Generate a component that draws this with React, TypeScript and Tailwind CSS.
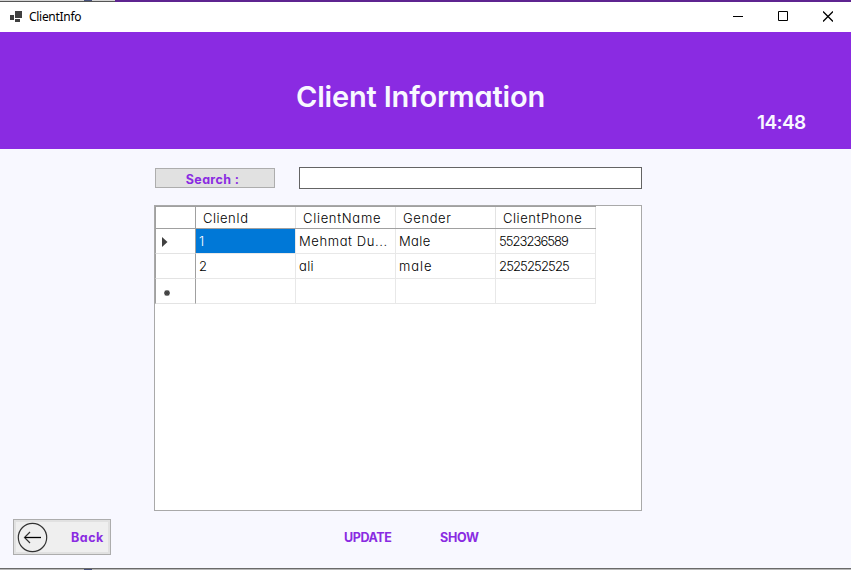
import React from "react";

type Cell = { text: string; cls: string };

const columns: Cell[] = [
  { text: "ClienId", cls: "tracking-[0.5px]" },
  { text: "ClientName", cls: "tracking-[0.7px]" },
  { text: "Gender", cls: "tracking-[0.6px]" },
  { text: "ClientPhone", cls: "tracking-[0.55px]" },
];

const rows: Cell[][] = [
  [
    { text: "1", cls: "" },
    { text: "Mehmat Du...", cls: "tracking-[0.6px]" },
    { text: "Male", cls: "tracking-[0.4px]" },
    { text: "5523236589", cls: "tracking-[-0.95px]" },
  ],
  [
    { text: "2", cls: "" },
    { text: "ali", cls: "tracking-[0.3px]" },
    { text: "male", cls: "tracking-[0.9px]" },
    { text: "2525252525", cls: "tracking-[-0.85px]" },
  ],
  [
    { text: "", cls: "" },
    { text: "", cls: "" },
    { text: "", cls: "" },
    { text: "", cls: "" },
  ],
];

function TitleBar() {
  return (
    <div className="flex h-[30px] shrink-0 items-center bg-white">
      <svg className="ml-[10px] mt-[-2px]" width="12" height="11" viewBox="0 0 12 11" fill="#404040" shapeRendering="crispEdges">
        <path d="M5 0h7v7H5zM0 4h4v5H0zM5 8h5v3H5z" />
      </svg>
      <span className="ml-[7px] mt-[-1px] font-['Noto_Sans','Open_Sans',sans-serif] text-[12px] tracking-[-0.3px] text-black">ClientInfo</span>
      <div className="mb-[2px] ml-auto mr-[18px] flex items-center gap-[35px]">
        <svg width="11" height="11" viewBox="0 0 11 11" stroke="#000" fill="none" className="ml-[-1px]">
          <path d="M0 5.5h10" />
        </svg>
        <svg width="11" height="11" viewBox="0 0 11 11" stroke="#000" fill="none" className="ml-[-1px]">
          <path d="M.5.5h9v9h-9z" />
        </svg>
        <svg width="10" height="11" viewBox="0 0 10 11" stroke="#000" strokeWidth="1.25" fill="none" className="ml-[-1px]">
          <path d="M0 .5l10 10M10 .5l-10 10" />
        </svg>
      </div>
    </div>
  );
}

function DataGrid() {
  return (
    <div className="ml-[154px] mt-4 h-[306px] w-[488px] shrink-0 border border-[#a9a9a9] bg-white text-[13px] font-light text-black">
      <div className="flex h-[23px] w-[441px] border-b border-t border-[#a0a0a0]">
        <div className="w-[41px] border-l border-r border-[#a0a0a0]" />
        {columns.map((c) => (
          <div key={c.text} className="w-[100px] border-r border-[#e3e3e3] pl-[7px] leading-[22px]">
            <span className={c.cls}>{c.text}</span>
          </div>
        ))}
      </div>
      {rows.map((row, r) => (
        <div key={r} className="flex h-[25px] w-[441px]">
          <div className="flex w-[41px] items-center border-b border-l border-r border-b-[#e3e3e3] border-l-[#a0a0a0] border-r-[#a0a0a0] pl-[6px]">
            {r === 0 && (
              <svg width="6" height="10" viewBox="0 0 6 10" fill="#404040" className="mt-[2px]">
                <path d="M0 0l5.5 5L0 10z" />
              </svg>
            )}
            {r === 2 && (
              <svg width="6" height="6" viewBox="0 0 6 6" stroke="#404040" strokeWidth="1.3" className="ml-[2px] mt-[4px]">
                <path d="M3 0v6M0 3h6M.8.8l4.4 4.4M5.2.8L.8 5.2" />
              </svg>
            )}
          </div>
          {row.map((c, i) => (
            <div
              key={i}
              className={
                r === 0 && i === 0
                  ? "w-[100px] border-b border-r border-[#e8e8e8] bg-[#0078d7] bg-clip-padding pl-[3px] leading-6 text-white"
                  : "w-[100px] whitespace-nowrap border-b border-r border-[#e8e8e8] pl-[3px] leading-6"
              }
            >
              <span className={c.cls}>{c.text}</span>
            </div>
          ))}
        </div>
      ))}
    </div>
  );
}

export default function App() {
  return (
    <div className="flex h-[570px] w-[851px] flex-col overflow-hidden bg-[#f8f8ff] font-['Inter','Lato',sans-serif] [font-feature-settings:'cv11']">
      <div className="flex h-[2px] shrink-0 border-b border-[#555555] bg-[#d4d4d4]">
        <div className="ml-[84px] h-[1px] w-[8px] bg-[#46507a]" />
        <div className="ml-[23px] h-[2px] flex-1 bg-[#5e2490]" />
      </div>
      <TitleBar />
      <header className="flex h-[117px] shrink-0 flex-col bg-[#8a2be2] text-[#f8f8ff]">
        <h1 className="ml-[296px] mt-[44px] whitespace-nowrap text-[29px] font-semibold leading-[42px] tracking-[-0.18px]">Client Information</h1>
        <div className="ml-[757px] mt-[-5px] text-[19px] font-semibold leading-5 tracking-[-0.6px]">14:48</div>
      </header>
      <div className="flex shrink-0 pl-[155px] pt-[18px]">
        <button className="mt-[1px] flex h-[20px] w-[120px] items-center justify-center border border-[#adadad] bg-[#e1e1e1] pr-[5px] pt-[4px] text-[12.500px] font-bold leading-none tracking-[0.35px] text-[#8a2be2]">
          Search :
        </button>
        <input className="ml-6 h-[22px] w-[343px] border border-[#646464] bg-white outline-none" />
      </div>
      <DataGrid />
      <div className="mt-2 flex h-[36px] shrink-0 items-center pl-[13px] text-[12.500px] font-bold text-[#8a2be2]">
        <button className="flex h-[36px] w-[98px] items-center border border-[#adadad] bg-[#efefef] pl-[3px] shadow-[inset_0_0_0_2px_#e1e1e1]">
          <svg width="31" height="31" viewBox="0 0 31 31" fill="none" stroke="#333">
            <circle cx="15.5" cy="15.5" r="14.2" strokeWidth="1.2" />
            <path d="M13 10l-5.500 5.500 5.500 5.500" strokeWidth="1.2" />
            <path d="M8 15.500h16" stroke="#000" strokeWidth="1.3" />
          </svg>
          <span className="ml-[23px] pt-[2px] tracking-[0.5px]">Back</span>
        </button>
        <button className="ml-[233px] pt-[2px]">
          <span className="block w-[48px] whitespace-nowrap text-left tracking-[-0.4px]">UPDATE</span>
        </button>
        <button className="ml-[48px] pt-[2px]">
          <span className="block whitespace-nowrap tracking-[-0.3px]">SHOW</span>
        </button>
      </div>
      <div className="mt-auto flex h-[2px] shrink-0 border-t border-[#6a6a6a] bg-[#b8b8b8]">
        <div className="ml-[84px] h-[1px] w-[8px] bg-[#46507a]" />
      </div>
    </div>
  );
}
